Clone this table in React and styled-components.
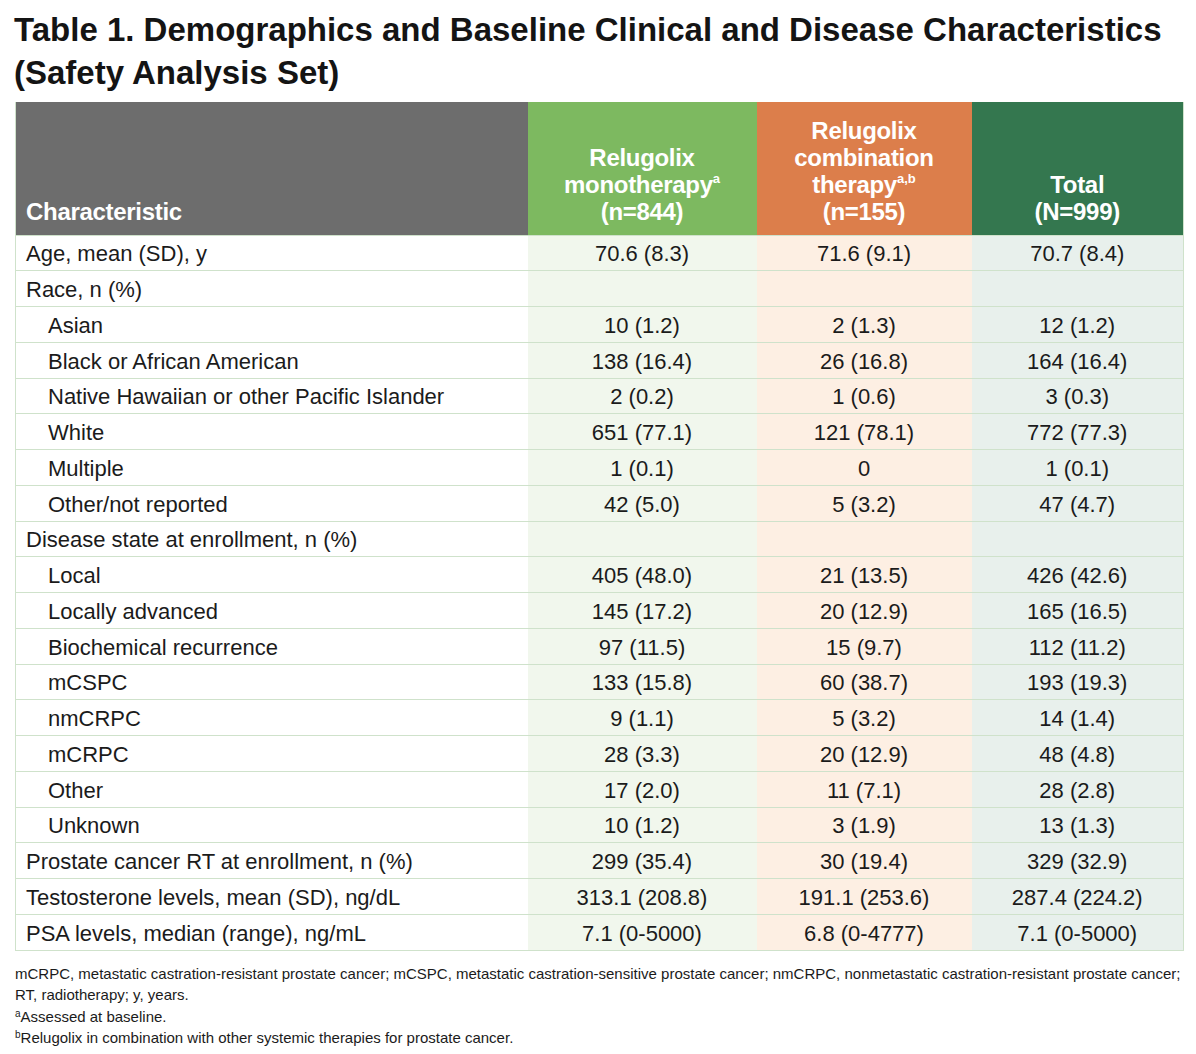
import React from 'react';
import styled, {createGlobalStyle} from 'styled-components';

const GlobalStyle = createGlobalStyle`
  body {
    margin: 0;
    background: #ffffff;
    font-family: "Liberation Sans", Arial, sans-serif;
    color: #1b1b1b;
  }
`;

const COLORS = {
    char: {head: '#6d6d6d', body: '#ffffff'},
    mono: {head: '#7db960', body: '#f1f7ed'},
    combo: {head: '#dc7e4b', body: '#fdefe3'},
    total: {head: '#34774f', body: '#e8f0ec'},
};

const Page = styled.div`
  width: 1196px;
  padding: 8px 13px 0 15px;
  box-sizing: border-box;
`;

const Title = styled.h1`
  margin: 0 0 8px -1px;
  font-size: 33px;
  line-height: 43px;
  font-weight: 700;
  color: #141414;
`;

const Table = styled.table`
  width: 1168px;
  border-collapse: collapse;
  table-layout: fixed;
  border-left: 1px solid #cfe2cb;
  border-right: 1px solid #cfe2cb;
`;

const HeadCell = styled.th`
  background: ${p => COLORS[p.$col].head};
  color: #ffffff;
  font-size: 24px;
  line-height: 27px;
  font-weight: 700;
  text-align: ${p => (p.$col === 'char' ? 'left' : 'center')};
  vertical-align: bottom;
  padding: 14px ${p => (p.$col === 'char' ? '10px' : '6px')} 10px;
  height: 133px;
  box-sizing: border-box;
  letter-spacing: -0.3px;

  sup {
    font-size: 13px;
    line-height: 0;
    vertical-align: 10px;
    letter-spacing: 0;
  }
`;

const Row = styled.tr`
  border-top: 1px solid #cfe2cb;
  border-bottom: 1px solid #cfe2cb;
`;

const Cell = styled.td`
  background: ${p => COLORS[p.$col].body};
  font-size: 22px;
  height: 35.75px;
  box-sizing: border-box;
  padding: 2px ${p => (p.$col === 'char' ? '10px' : '4px')} 0
    ${p => (p.$col === 'char' ? (p.$indent ? '32px' : '10px') : '4px')};
  text-align: ${p => (p.$col === 'char' ? 'left' : 'center')};
  white-space: nowrap;
  line-height: 25px;
`;

const Notes = styled.div`
  margin-top: 12px;
  font-size: 15px;
  line-height: 21.5px;
  color: #1b1b1b;

  sup {
    font-size: 10px;
    line-height: 0;
    vertical-align: 5px;
  }
`;

const rows = [
    ['Age, mean (SD), y', '70.6 (8.3)', '71.6 (9.1)', '70.7 (8.4)'],
    ['Race, n (%)', '', '', ''],
    ['Asian', '10 (1.2)', '2 (1.3)', '12 (1.2)', true],
    ['Black or African American', '138 (16.4)', '26 (16.8)', '164 (16.4)', true],
    ['Native Hawaiian or other Pacific Islander', '2 (0.2)', '1 (0.6)', '3 (0.3)', true],
    ['White', '651 (77.1)', '121 (78.1)', '772 (77.3)', true],
    ['Multiple', '1 (0.1)', '0', '1 (0.1)', true],
    ['Other/not reported', '42 (5.0)', '5 (3.2)', '47 (4.7)', true],
    ['Disease state at enrollment, n (%)', '', '', ''],
    ['Local', '405 (48.0)', '21 (13.5)', '426 (42.6)', true],
    ['Locally advanced', '145 (17.2)', '20 (12.9)', '165 (16.5)', true],
    ['Biochemical recurrence', '97 (11.5)', '15 (9.7)', '112 (11.2)', true],
    ['mCSPC', '133 (15.8)', '60 (38.7)', '193 (19.3)', true],
    ['nmCRPC', '9 (1.1)', '5 (3.2)', '14 (1.4)', true],
    ['mCRPC', '28 (3.3)', '20 (12.9)', '48 (4.8)', true],
    ['Other', '17 (2.0)', '11 (7.1)', '28 (2.8)', true],
    ['Unknown', '10 (1.2)', '3 (1.9)', '13 (1.3)', true],
    ['Prostate cancer RT at enrollment, n (%)', '299 (35.4)', '30 (19.4)', '329 (32.9)'],
    ['Testosterone levels, mean (SD), ng/dL', '313.1 (208.8)', '191.1 (253.6)', '287.4 (224.2)'],
    ['PSA levels, median (range), ng/mL', '7.1 (0-5000)', '6.8 (0-4777)', '7.1 (0-5000)'],
];

const App = () => {
    return (
        <Page>
            <GlobalStyle/>
            <Title>
                Table 1. Demographics and Baseline Clinical and Disease Characteristics<br/>
                (Safety Analysis Set)
            </Title>
            <Table>
                <colgroup>
                    <col style={{width: 512}}/>
                    <col style={{width: 229}}/>
                    <col style={{width: 215}}/>
                    <col style={{width: 212}}/>
                </colgroup>
                <thead>
                    <tr>
                        <HeadCell $col="char">Characteristic</HeadCell>
                        <HeadCell $col="mono">
                            Relugolix<br/>monotherapy<sup>a</sup><br/>(n=844)
                        </HeadCell>
                        <HeadCell $col="combo">
                            Relugolix<br/>combination<br/>therapy<sup>a,b</sup><br/>(n=155)
                        </HeadCell>
                        <HeadCell $col="total">
                            Total<br/>(N=999)
                        </HeadCell>
                    </tr>
                </thead>
                <tbody>
                    {rows.map(([label, mono, combo, total, indent]) => (
                        <Row key={label}>
                            <Cell $col="char" $indent={indent}>{label}</Cell>
                            <Cell $col="mono">{mono}</Cell>
                            <Cell $col="combo">{combo}</Cell>
                            <Cell $col="total">{total}</Cell>
                        </Row>
                    ))}
                </tbody>
            </Table>
            <Notes>
                mCRPC, metastatic castration-resistant prostate cancer; mCSPC, metastatic castration-sensitive prostate cancer; nmCRPC, nonmetastatic castration-resistant prostate cancer;<br/>
                RT, radiotherapy; y, years.<br/>
                <sup>a</sup>Assessed at baseline.<br/>
                <sup>b</sup>Relugolix in combination with other systemic therapies for prostate cancer.
            </Notes>
        </Page>
    );
};

export default App;
